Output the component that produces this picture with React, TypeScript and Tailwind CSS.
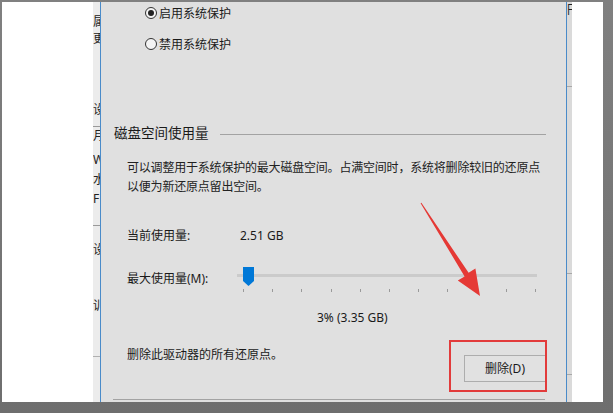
const FONT = "font-['Noto_Sans','Noto_Sans_CJK_SC',sans-serif]";

const TICKS = [0, 1, 2, 3, 4, 5, 6, 7, 8, 9, 10];

function Radio({ checked, label }: { checked: boolean; label: string }) {
  return (
    <div className="flex h-[22px] items-center pl-[44px]">
      <span className="flex h-[12px] w-[12px] items-center justify-center rounded-full border border-[#333] bg-[#f4f4f4]">
        {checked && <span className="h-[6px] w-[6px] rounded-full bg-[#222]" />}
      </span>
      <span className="ml-[2px] mt-[1px] text-[12px] leading-[18px] text-[#1a1a1a]">{label}</span>
    </div>
  );
}

function Slider() {
  return (
    <div className="relative h-[30px] w-[300px]">
      <div className="absolute left-0 right-0 top-[10px] h-[3px] bg-[#cbcbcb]" />
      {TICKS.map((i) => (
        <span
          key={i}
          className="absolute top-[25px] h-[3px] w-px bg-[#9a9a9a]"
          style={{ left: 6 + i * 29.2 }}
        />
      ))}
      <svg className="absolute left-[6px] top-[3px]" width="11" height="19" viewBox="0 0 11 19">
        <path d="M0 0 H11 V14 L5.5 19 L0 14 Z" fill="#0078d7" />
      </svg>
    </div>
  );
}

// cut-off bits of the window behind the dialog
function LeftStrip() {
  return (
    <div className="w-[7px] overflow-hidden bg-[#ececec] text-[12px] leading-[16px] text-[#222]">
      <div className="mt-[12px]">属</div>
      <div className="mt-[1px]">更</div>
      <div className="mt-[55px]">设</div>
      <div className="mt-[8px] h-px w-full bg-[#9a9a9a]" />
      <div className="mt-[1px]">月</div>
      <div className="mt-[8px]">W</div>
      <div className="mt-[4px]">水</div>
      <div className="mt-[3px]">F</div>
      <div className="mt-[18px] h-px w-full bg-[#9a9a9a]" />
      <div className="mt-[16px]">设</div>
      <div className="mt-[40px]">训</div>
      <div className="mt-[42px] h-px w-full bg-[#b0b0b0]" />
    </div>
  );
}

function RightStrip() {
  return (
    <div className="w-[5px] overflow-hidden bg-[#dadada] text-[12px] leading-[16px] text-[#222]">
      <div>円</div>
      <div className="mt-[68px] h-px w-full bg-[#a8a8a8]" />
      <div className="mt-[186px] h-px w-full bg-[#a8a8a8]" />
      <div className="mt-[100px] h-px w-full bg-[#a8a8a8]" />
    </div>
  );
}

function Dialog() {
  return (
    <div className="w-[465px] bg-[#e0e0e0] text-[12px] text-[#1a1a1a]">
      <Radio checked label="启用系统保护" />
      <div className="mt-[9px]">
        <Radio checked={false} label="禁用系统保护" />
      </div>

      <div className="mt-[68px] flex h-[20px] items-center pl-[13px]">
        <span className="text-[13.5px] leading-[18px]">磁盘空间使用量</span>
        <span className="ml-[11px] mt-[2px] h-px w-[326px] bg-[#a3a3a3]" />
      </div>

      <p className="mt-[15px] pl-[26px] text-[12px] leading-[19px] tracking-[-0.2px] text-[#222]">
        可以调整用于系统保护的最大磁盘空间。占满空间时，系统将删除较旧的还原点
        <br />
        以便为新还原点留出空间。
      </p>

      <div className="mt-[30px] flex h-[20px] items-center pl-[26px]">
        <span className="w-[113px]">当前使用量:</span>
        <span>2.51 GB</span>
      </div>

      <div className="mt-[18px] flex h-[30px] items-center pl-[26px]">
        <span className="w-[110px]">最大使用量(M):</span>
        <Slider />
      </div>

      <div className="mt-[15px] h-[18px] pl-[216px] leading-[18px]">3% (3.35 GB)</div>

      <div className="mt-[19px] flex items-start justify-between pl-[26px] pr-[20px]">
        <span className="leading-[18px]">删除此驱动器的所有还原点。</span>
        <button className="mt-[9px] flex h-[27px] w-[82px] items-center justify-center border border-[#adadad] bg-[#e1e1e1] text-[12px] text-[#1a1a1a]">
          删除(D)
        </button>
      </div>

      <div className="ml-[12px] mt-[17px] h-px w-[432px] bg-[#a3a3a3]" />
    </div>
  );
}

export default function App() {
  return (
    <div className={`relative h-[413px] w-[613px] bg-gradient-to-b from-[#808080] to-[#6e6e6e] pb-[11px] pl-[2px] pr-[10px] pt-[2px] ${FONT}`}>
      <div className="flex h-[400px] overflow-hidden bg-white">
        <div className="w-[91px] bg-white" />
        <LeftStrip />
        <div className="w-px bg-[#4a8bc9]" />
        <Dialog />
        <div className="w-px bg-[#4a8bc9]" />
        <RightStrip />
        <div className="flex-1 bg-white" />
      </div>

      {/* annotation: red box + arrow drawn over the screenshot */}
      <div className="pointer-events-none absolute left-[449px] top-[340px] h-[52px] w-[98px] border-2 border-[#e23b3b]" />
      <svg className="pointer-events-none absolute left-0 top-0" width="613" height="413" viewBox="0 0 613 413">
        <polygon
          points="421.4,202.7 468.6,272.8 475.4,268.6 480,296 457.8,280.6 464.6,276.4 420.6,203.3"
          fill="#e53935"
        />
      </svg>
    </div>
  );
}
